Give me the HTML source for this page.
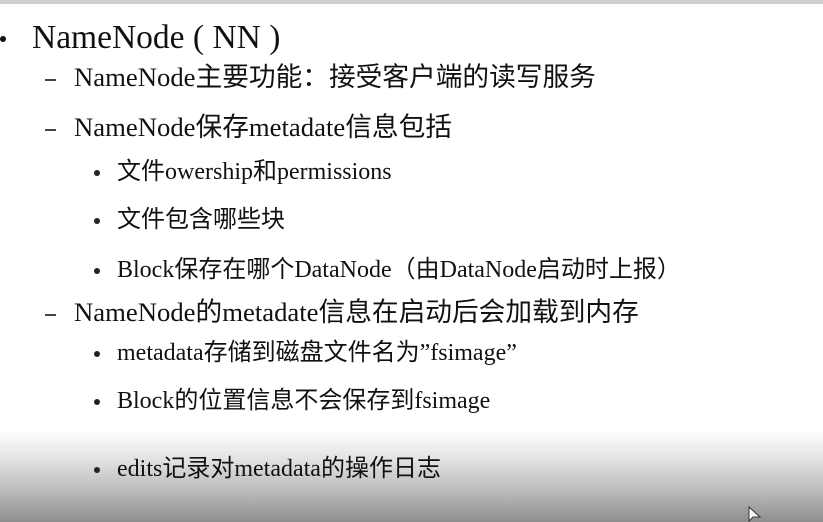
<!DOCTYPE html>
<html><head><meta charset="utf-8"><style>
html,body{margin:0;padding:0}
body{width:823px;height:522px;overflow:hidden;position:relative;font-family:"Liberation Serif","Noto Sans CJK SC",serif;color:#111;
background:linear-gradient(to bottom,#fff 0px,#fff 430px,#e2e2e2 460px,#b5b5b5 495px,#8e8e8e 522px);}
.top{position:absolute;left:0;top:0;width:823px;height:4px;background:#cfcfcf}
.t{position:absolute;white-space:nowrap;line-height:1}
.l1{font-size:33.5px;left:32px;top:21px}
.l2{font-size:26.7px;left:74px}
.l3{font-size:24px;left:117px}
.b1{position:absolute;left:0;top:36px;width:6px;height:6px;border-radius:50%;background:#111}
.d{position:absolute;left:45px;width:11px;height:1.5px;background:#444}
.b3{position:absolute;left:94px;width:6px;height:6px;border-radius:50%;background:#222}
</style></head><body>
<div class="top"></div>
<div class="b1"></div>
<div class="t l1">NameNode ( NN )</div>
<div class="d" style="top:79px"></div><div class="t l2" style="top:64px">NameNode主要功能：接受客户端的读写服务</div>
<div class="d" style="top:129px"></div><div class="t l2" style="top:114px">NameNode保存metadate信息包括</div>
<div class="b3" style="top:170px"></div><div class="t l3" style="top:160px">文件owership和permissions</div>
<div class="b3" style="top:218px"></div><div class="t l3" style="top:208px">文件包含哪些块</div>
<div class="b3" style="top:268px"></div><div class="t l3" style="top:258px">Block保存在哪个DataNode（由DataNode启动时上报）</div>
<div class="d" style="top:314px"></div><div class="t l2" style="top:299px">NameNode的metadate信息在启动后会加载到内存</div>
<div class="b3" style="top:351px"></div><div class="t l3" style="top:341px">metadata存储到磁盘文件名为”fsimage”</div>
<div class="b3" style="top:399px"></div><div class="t l3" style="top:389px">Block的位置信息不会保存到fsimage</div>
<div class="b3" style="top:467px"></div><div class="t l3" style="top:457px">edits记录对metadata的操作日志</div>
<svg style="position:absolute;left:748px;top:506px" width="14" height="16"><path d="M1 1 L1 15 L5 11 L12 11 Z" fill="#fff" stroke="#333"/></svg>
</body></html>
